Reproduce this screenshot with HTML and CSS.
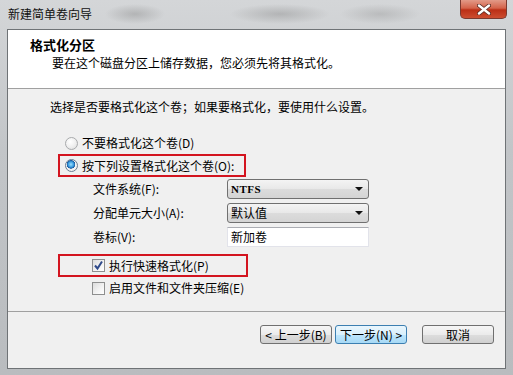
FILE: index.html
```html
<!DOCTYPE html>
<html lang="zh-CN">
<head>
<meta charset="utf-8">
<title>新建简单卷向导</title>
<link rel="stylesheet" href="styles.css">
</head>
<body>
<div class="window">
  <div class="titlebar">
    <span class="title">新建简单卷向导</span>
    <span class="close">
      <svg width="14" height="11" viewBox="0 0 14 11">
        <path d="M2 1.5 L12 9.5 M12 1.5 L2 9.5" stroke="#5a2a22" stroke-width="4" stroke-linecap="round"/>
        <path d="M2 1.5 L12 9.5 M12 1.5 L2 9.5" stroke="#ffffff" stroke-width="2.4" stroke-linecap="round"/>
      </svg>
    </span>
  </div>
  <div class="client">
    <div class="header">
      <div class="h-title">格式化分区</div>
      <div class="h-sub">要在这个磁盘分区上储存数据，您必须先将其格式化。</div>
    </div>
    <div class="main">
      <div class="intro">选择是否要格式化这个卷；如果要格式化，要使用什么设置。</div>
      <div class="opt opt-first">
        <span class="radio"></span><span>不要格式化这个卷(D)</span>
      </div>
      <div class="opt opt-radio2 hl">
        <span class="radio on"></span><span>按下列设置格式化这个卷(O):</span>
      </div>
      <div class="form">
        <div class="frow">
          <span class="flabel">文件系统(F):</span>
          <span class="select"><span class="sel-text ascii">NTFS</span><span class="arrow"></span></span>
        </div>
        <div class="frow">
          <span class="flabel">分配单元大小(A):</span>
          <span class="select"><span class="sel-text">默认值</span><span class="arrow"></span></span>
        </div>
        <div class="frow">
          <span class="flabel">卷标(V):</span>
          <span class="textbox">新加卷</span>
        </div>
      </div>
      <div class="chk-row chk-first hl">
        <span class="check on">
          <svg width="11" height="11" viewBox="0 0 11 11"><path d="M2 5.5 L4.5 8.5 L9 1.5" fill="none" stroke="#2f4a8a" stroke-width="2"/></svg>
        </span><span>执行快速格式化(P)</span>
      </div>
      <div class="chk-row">
        <span class="check"></span><span>启用文件和文件夹压缩(E)</span>
      </div>
    </div>
    <div class="footer">
      <span class="btn">&lt; 上一步(B)</span>
      <span class="btn btn-default">下一步(N) &gt;</span>
      <span class="btn btn-cancel">取消</span>
    </div>
  </div>
</div>
</body>
</html>
```
FILE: styles.css
```css
html, body {
  margin: 0;
  padding: 0;
}
body {
  font-family: "Noto Sans CJK SC", "Noto Sans", sans-serif;
  font-size: 12px;
  color: #000;
}
.window {
  width: 513px;
  height: 375px;
  box-sizing: border-box;
  padding: 0 7px 6px 7px;
  display: flex;
  flex-direction: column;
  background:
    radial-gradient(ellipse 30px 10px at 135px 14px, rgba(120,120,120,0.35), transparent),
    radial-gradient(ellipse 50px 10px at 280px 14px, rgba(120,120,120,0.35), transparent),
    radial-gradient(ellipse 40px 10px at 380px 14px, rgba(130,130,130,0.3), transparent),
    linear-gradient(to bottom, #d4d6d8 0%, #c2c5c8 40%, #b9bcbf 100%);
}
.titlebar {
  height: 29px;
  display: flex;
  justify-content: space-between;
  align-items: flex-start;
  flex: none;
}
.title {
  padding: 7px 0 0 1px;
  line-height: 14px;
  color: #111;
}
.close {
  width: 47px;
  height: 19px;
  margin-right: -1px;
  box-sizing: border-box;
  border: 1px solid #7b3a30;
  border-top: none;
  border-radius: 0 0 5px 5px;
  background: linear-gradient(to bottom, #e29a88 0%, #d4634a 45%, #bb2f16 55%, #cc4d30 100%);
  display: flex;
  align-items: center;
  justify-content: center;
}
.client {
  flex: 1;
  display: flex;
  flex-direction: column;
  border: 1px solid #6f7376;
  background: #f0f0f0;
}
.header {
  height: 59px;
  box-sizing: border-box;
  background: #fff;
  border-bottom: 1px solid #a0a0a0;
  padding: 7px 0 0 22px;
  flex: none;
}
.h-title {
  font-weight: bold;
  font-size: 13px;
  line-height: 16px;
}
.h-sub {
  margin-top: 1px;
  line-height: 18px;
  padding-left: 22px;
}
.main {
  flex: 1;
  padding: 11px 0 0 42px;
}
.intro {
  line-height: 14px;
}
.opt, .chk-row {
  display: flex;
  align-items: center;
  margin-left: 8px;
  box-sizing: border-box;
  border: 2px solid transparent;
  line-height: 14px;
  gap: 4px;
}
.opt {
  width: 188px;
  padding-left: 5px;
}
.opt-first {
  margin-top: 18px;
  height: 22px;
}
.opt-radio2 {
  height: 23px;
}
.hl {
  border-color: #d3141f;
}
.radio {
  width: 13px;
  height: 13px;
  box-sizing: border-box;
  border-radius: 50%;
  border: 1px solid #a8aaac;
  background: radial-gradient(circle at 40% 35%, #ffffff 0%, #f0f0f0 50%, #dadada 100%);
  flex: none;
}
.radio.on {
  border-color: #6a7c90;
  background:
    radial-gradient(circle at 45% 40%, #9fe0ff 0%, #3c9ee0 30%, #1a5aa0 45%, transparent 50%),
    radial-gradient(circle, #ffffff 0%, #e8e8e8 100%);
}
.form {
  padding-left: 43px;
}
.frow {
  height: 24px;
  display: flex;
  align-items: center;
}
.flabel {
  width: 134px;
  line-height: 14px;
}
.select {
  width: 142px;
  height: 20px;
  box-sizing: border-box;
  border: 1px solid #707070;
  border-radius: 3px;
  background: linear-gradient(to bottom, #f4f4f4 0%, #e8e8e8 50%, #dcdcdc 51%, #d4d4d4 100%);
  display: flex;
  align-items: center;
  justify-content: space-between;
  padding: 0 5px 0 3px;
}
.sel-text {
  line-height: 14px;
}
.ascii {
  font-family: "Liberation Serif", serif;
  font-weight: bold;
  font-size: 11px;
  letter-spacing: 0.5px;
}
.arrow {
  width: 0;
  height: 0;
  border-left: 4px solid transparent;
  border-right: 4px solid transparent;
  border-top: 4px solid #111;
}
.textbox {
  width: 142px;
  height: 20px;
  box-sizing: border-box;
  background: #fff;
  border: 1px solid #e2e3ea;
  border-top-color: #abadb3;
  padding-left: 3px;
  line-height: 18px;
}
.chk-row {
  width: 190px;
  padding-left: 32px;
}
.chk-first {
  margin-top: 5px;
  height: 23px;
}
.chk-row + .chk-row {
  height: 22px;
}
.check {
  width: 13px;
  height: 13px;
  box-sizing: border-box;
  border: 1px solid #8e8f8f;
  background: linear-gradient(135deg, #dcdcdc 0%, #f4f4f4 60%, #ffffff 100%);
  flex: none;
  display: flex;
  align-items: center;
  justify-content: center;
}
.footer {
  height: 43px;
  flex: none;
  border-top: 1px solid #a0a0a0;
  display: flex;
  justify-content: flex-end;
  align-items: flex-start;
  padding: 13px 11px 0 0;
  box-sizing: content-box;
}
.btn {
  width: 72px;
  height: 19px;
  box-sizing: border-box;
  border: 1px solid #707070;
  border-radius: 3px;
  background: linear-gradient(to bottom, #f6f6f6 0%, #ebebeb 50%, #dddddd 51%, #d0d0d0 100%);
  display: flex;
  align-items: center;
  justify-content: center;
  line-height: 14px;
  margin-left: 3px;
}
.btn-default {
  border-color: #3c7fb1;
  background: linear-gradient(to bottom, #eaf6fd 0%, #d9f0fc 50%, #bee6fd 51%, #a7d9f5 100%);
}
.btn-cancel {
  margin-left: 15px;
}
```
